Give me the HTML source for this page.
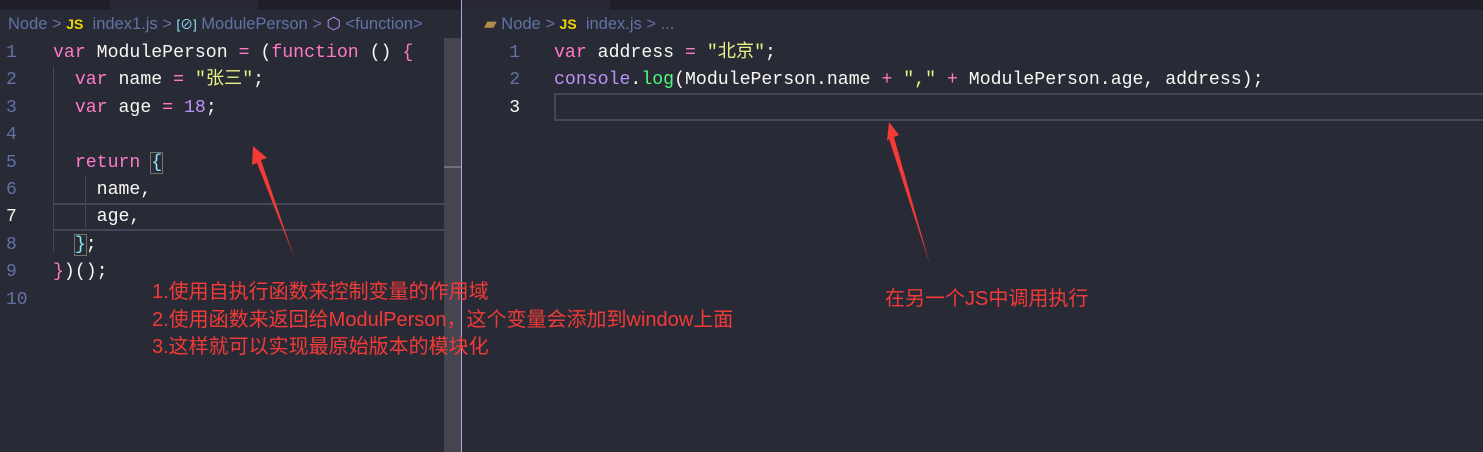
<!DOCTYPE html>
<html><head><meta charset="utf-8"><style>
*{margin:0;padding:0;box-sizing:border-box}
body{width:1483px;height:452px;background:#282a36;overflow:hidden;position:relative;font-family:"Liberation Mono",monospace}
.abs{position:absolute}
.code{position:absolute;font-size:18.2px;line-height:27.4px;white-space:pre;color:#f8f8f2}
.ln{position:absolute;font-size:18px;line-height:27.4px;color:#6272a4;text-align:right;white-space:pre}
.k{color:#ff79c6}.s{color:#e9f284}.n{color:#bd93f9}.f{color:#50fa7b}.c{color:#8be9fd}.p{color:#bd93f9}
.bc{font-family:"Liberation Sans","Noto Sans CJK SC",sans-serif;font-size:16.5px;color:#6272a4;position:absolute;top:14px;white-space:pre}
.js{color:#f1d700;font-weight:bold;font-size:14px}
.ann{position:absolute;font-family:"Liberation Sans","Noto Sans CJK SC",sans-serif;font-size:20px;color:#f23a36;white-space:pre;line-height:27.5px}
</style></head><body>
<div class="abs" style="left:0;top:0;width:1483px;height:10px;background:#1e1f29"></div>
<div class="abs" style="left:110px;top:0;width:148px;height:10px;background:#272833"></div>
<div class="abs" style="left:462px;top:0;width:148px;height:10px;background:#272833"></div>

<div class="bc" style="left:8px">Node &gt; <span class="js">JS</span>  index1.js &gt; <span style="color:#8be9fd;font-size:13px">[⊘]</span> ModulePerson &gt; <span style="color:#bd93f9">⬡</span> &lt;function&gt;</div>
<div class="bc" style="left:484px"><span style="color:#b38a4a">▰</span> Node &gt; <span class="js">JS</span>  index.js &gt; ...</div>

<!-- left editor -->
<div class="abs" style="left:53px;top:203px;width:391px;height:28px;border-top:2px solid #44475a;border-bottom:2px solid #44475a"></div>
<div class="abs" style="left:53px;top:66px;width:1px;height:186px;background:#44475a"></div>
<div class="abs" style="left:85px;top:176px;width:1px;height:55px;background:#44475a"></div>
<div class="ln" style="left:0;top:40px;text-align:left;padding-left:6px;width:40px">1
2
3
4
5
6
<span style="color:#f8f8f2">7</span>
8
9
10</div>
<div class="code" style="left:53px;top:40px"><span class="k">var</span> ModulePerson <span class="k">=</span> (<span class="k">function</span> () <span class="k">{</span>
  <span class="k">var</span> name <span class="k">=</span> <span class="s">"张三"</span>;
  <span class="k">var</span> age <span class="k">=</span> <span class="n">18</span>;

  <span class="k">return</span> <span class="c" style="outline:1px solid #6a7a6a">{</span>
    name,
    age,
  <span class="c" style="outline:1px solid #6a7a6a">}</span>;
<span class="k">}</span>)();</div>
<div class="abs" style="left:444px;top:38px;width:17px;height:414px;background:#44454e"></div>
<div class="abs" style="left:444px;top:166px;width:17px;height:2px;background:#707078"></div>
<div class="abs" style="left:461px;top:0;width:1px;height:452px;background:#b4a4d8"></div>

<!-- right editor -->
<div class="abs" style="left:554px;top:93px;width:929px;height:28px;border:2px solid #44475a;border-right:none"></div>
<div class="ln" style="left:480px;top:40px;width:40px">1
2
<span style="color:#f8f8f2">3</span></div>
<div class="code" style="left:554px;top:40px"><span class="k">var</span> address <span class="k">=</span> <span class="s">"北京"</span>;
<span class="p">console</span>.<span class="f">log</span>(ModulePerson.name <span class="k">+</span> <span class="s">","</span> <span class="k">+</span> ModulePerson.age, address);</div>

<svg class="abs" style="left:0;top:0" width="1483" height="452">
<polygon points="253,146 267,158 261,160 294,257 257,163 252,165" fill="#f33a36"/>
<polygon points="889,122 899,135 894,137 930,265 889,139 887,141" fill="#f33a36"/>
</svg>

<div class="ann" style="left:152px;top:279px">1.使用自执行函数来控制变量的作用域
2.使用函数来返回给ModulPerson，这个变量会添加到window上面
3.这样就可以实现最原始版本的模块化</div>
<div class="ann" style="left:885px;top:286px">在另一个JS中调用执行</div>
</body></html>
